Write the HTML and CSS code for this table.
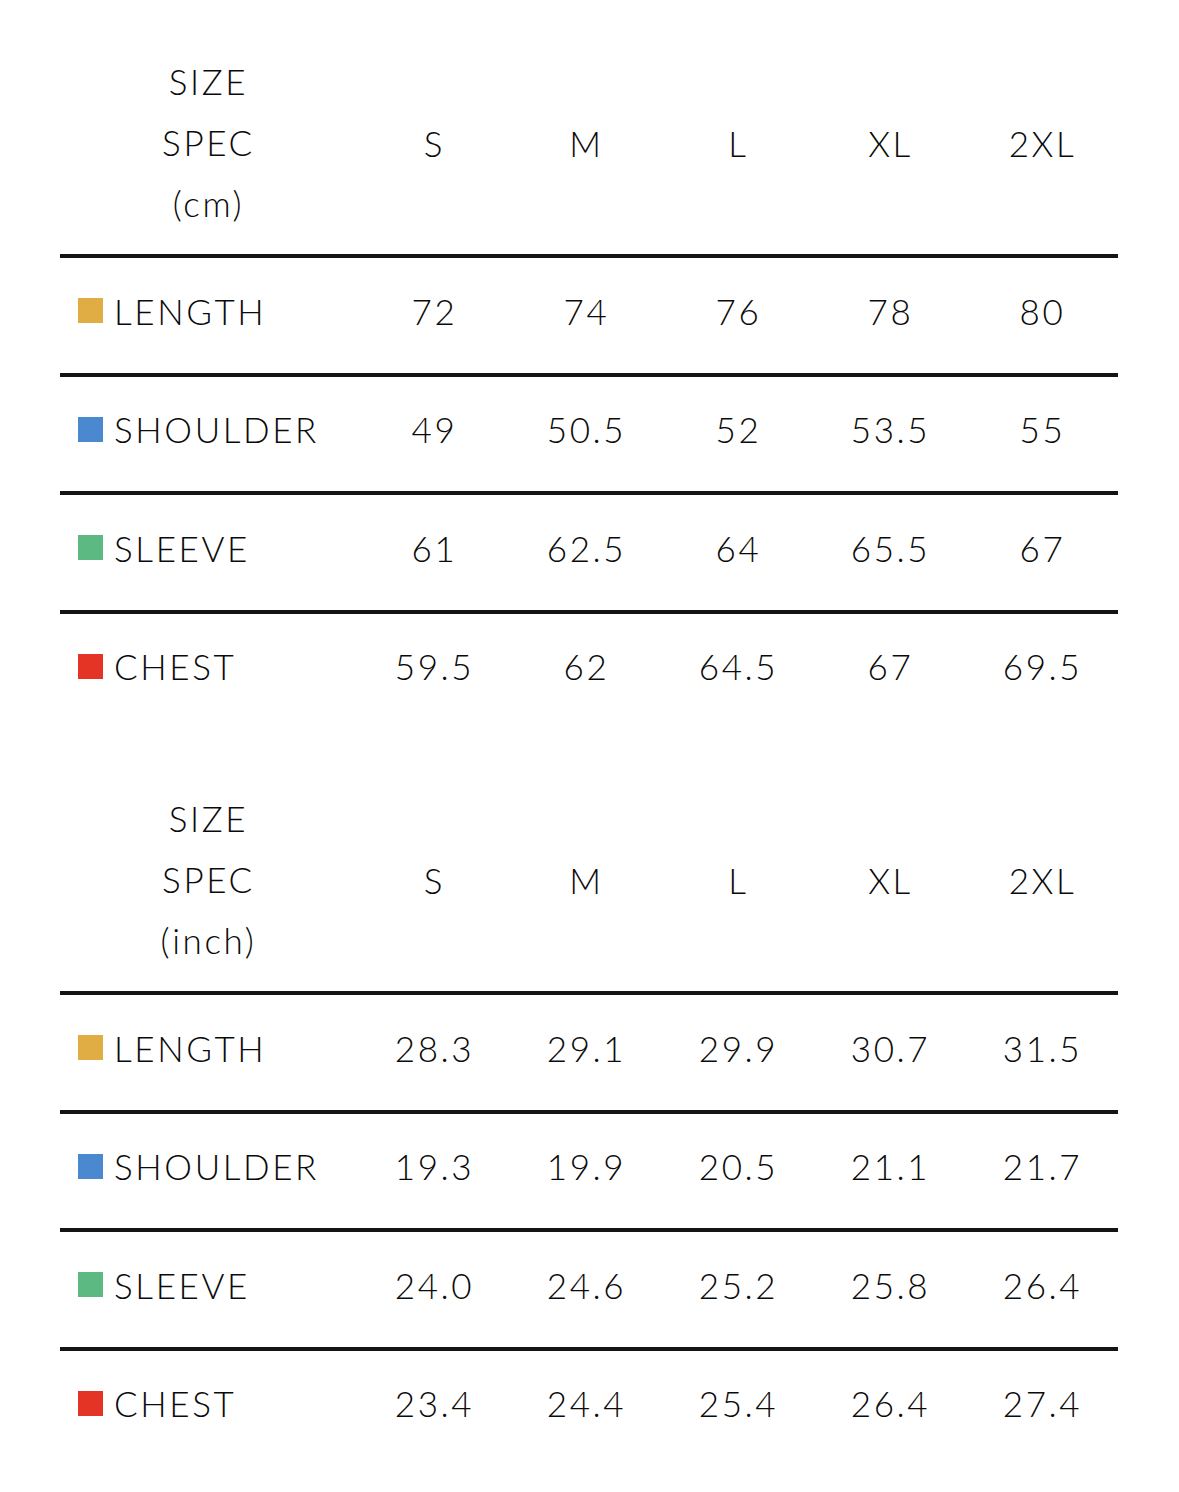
FILE: index.html
```html
<!DOCTYPE html>
<html lang="en">
<head>
<meta charset="utf-8">
<title>Size Spec</title>
<link rel="stylesheet" href="styles.css">
</head>
<body>
<main class="chart">
  <section class="table">
    <div class="row head">
      <div class="spec">SIZE<br>SPEC<br>(cm)</div>
      <div class="cell">S</div><div class="cell">M</div><div class="cell">L</div><div class="cell">XL</div><div class="cell">2XL</div>
    </div>
    <div class="row data">
      <div class="label"><span class="sw gold"></span>LENGTH</div>
      <div class="cell">72</div><div class="cell">74</div><div class="cell">76</div><div class="cell">78</div><div class="cell">80</div>
    </div>
    <div class="row data">
      <div class="label"><span class="sw blue"></span>SHOULDER</div>
      <div class="cell">49</div><div class="cell">50.5</div><div class="cell">52</div><div class="cell">53.5</div><div class="cell">55</div>
    </div>
    <div class="row data">
      <div class="label"><span class="sw green"></span>SLEEVE</div>
      <div class="cell">61</div><div class="cell">62.5</div><div class="cell">64</div><div class="cell">65.5</div><div class="cell">67</div>
    </div>
    <div class="row data">
      <div class="label"><span class="sw red"></span>CHEST</div>
      <div class="cell">59.5</div><div class="cell">62</div><div class="cell">64.5</div><div class="cell">67</div><div class="cell">69.5</div>
    </div>
  </section>
  <section class="table second">
    <div class="row head">
      <div class="spec">SIZE<br>SPEC<br>(inch)</div>
      <div class="cell">S</div><div class="cell">M</div><div class="cell">L</div><div class="cell">XL</div><div class="cell">2XL</div>
    </div>
    <div class="row data">
      <div class="label"><span class="sw gold"></span>LENGTH</div>
      <div class="cell">28.3</div><div class="cell">29.1</div><div class="cell">29.9</div><div class="cell">30.7</div><div class="cell">31.5</div>
    </div>
    <div class="row data">
      <div class="label"><span class="sw blue"></span>SHOULDER</div>
      <div class="cell">19.3</div><div class="cell">19.9</div><div class="cell">20.5</div><div class="cell">21.1</div><div class="cell">21.7</div>
    </div>
    <div class="row data">
      <div class="label"><span class="sw green"></span>SLEEVE</div>
      <div class="cell">24.0</div><div class="cell">24.6</div><div class="cell">25.2</div><div class="cell">25.8</div><div class="cell">26.4</div>
    </div>
    <div class="row data">
      <div class="label"><span class="sw red"></span>CHEST</div>
      <div class="cell">23.4</div><div class="cell">24.4</div><div class="cell">25.4</div><div class="cell">26.4</div><div class="cell">27.4</div>
    </div>
  </section>
</main>
</body>
</html>
```

FILE: styles.css
```css
html, body {
  margin: 0;
  padding: 0;
  background: #ffffff;
}

body {
  font-family: "Lato", "Noto Sans", "Liberation Sans", sans-serif;
  font-weight: 300;
  color: #0a0a0a;
  font-size: 35px;
  letter-spacing: 2.6px;
}

.chart {
  width: 1058px;
  margin-left: 60px;
  padding-top: 51px;
  display: flex;
  flex-direction: column;
  gap: 60px;
}

.table {
  display: flex;
  flex-direction: column;
}

.row {
  display: grid;
  grid-template-columns: 297px repeat(5, 152px);
  align-items: center;
}

.head {
  padding-bottom: 20px;
}

.spec {
  text-align: center;
  line-height: 61px;
}

.cell {
  text-align: center;
  padding-left: 3px;
}

.data {
  border-top: 4px solid #141414;
  box-sizing: content-box;
  height: 105.5px;
  padding-bottom: 9px;
}

.label {
  display: flex;
  align-items: center;
  gap: 11px;
  padding-left: 18px;
}

.sw {
  width: 25px;
  height: 25px;
  flex: none;
}

.gold { background: #e0ad45; }
.blue { background: #4a89d0; }
.green { background: #5cb982; }
.red { background: #e33426; }
```
